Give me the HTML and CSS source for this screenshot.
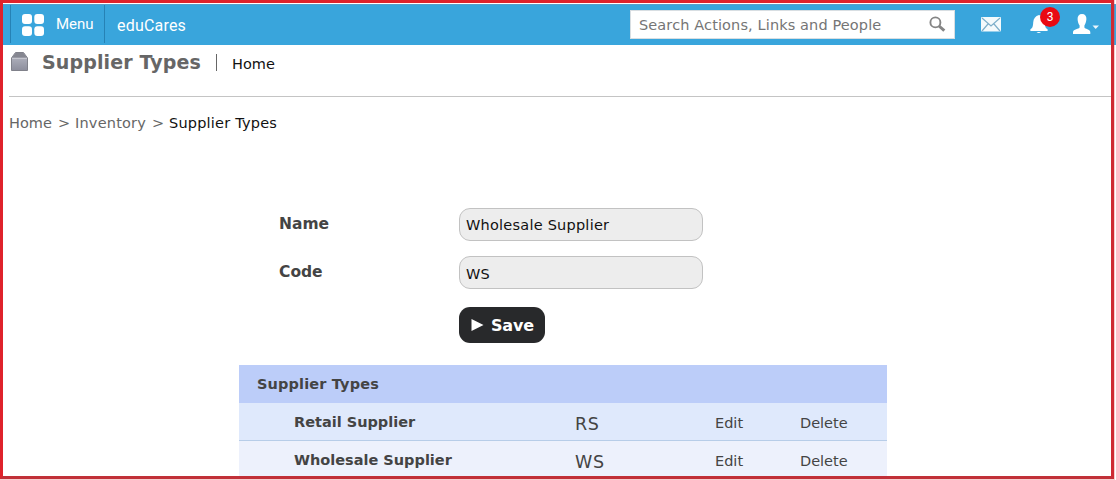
FILE: index.html
```html
<!DOCTYPE html>
<html lang="en">
<head>
<meta charset="utf-8">
<title>Supplier Types</title>
<link rel="stylesheet" href="styles.css">
</head>
<body>
<div class="screen">
  <header class="topbar">
    <a class="menu">
      <svg width="22" height="22" viewBox="0 0 22 22" fill="#fff"><rect width="10" height="10" rx="3"/><rect x="12.3" width="9.7" height="10" rx="3"/><rect y="12.3" width="10" height="9.7" rx="3"/><rect x="12.3" y="12.3" width="9.7" height="9.7" rx="3"/></svg>
      <span class="menu-label">Menu</span>
    </a>
    <span class="brand">eduCares</span>
    <div class="search">
      <span class="search-hint">Search Actions, Links and People</span>
      <svg width="17" height="17" viewBox="0 0 17 17" fill="none" stroke="#858585"><circle cx="6.4" cy="6.4" r="5" stroke-width="1.9"/><path d="M10 10l5.3 4.7" stroke-width="3"/></svg>
    </div>
    <svg class="mail" width="20" height="15" viewBox="0 0 20 15"><rect width="20" height="14.5" rx="1" fill="#f4fafc"/><path d="M1 1l9 8 9-8M1 14l6-7M19 14l-6-7" fill="none" stroke="#7dafca" stroke-width="1.2"/></svg>
    <div class="alerts">
      <svg width="18" height="19" viewBox="0 0 18 19" fill="#fff"><path d="M9 0C5.300 1 3.500 3.500 3.200 7.500 3 11.500 2.500 13 .4 14.300V16h17.200v-1.700c-2.100-1.300-2.600-2.800-2.800-6.800C14.500 3.500 12.700 1 9 0z"/><path d="M6.500 17h4.500q-2 2-4.500 0z"/></svg>
      <span class="badge">3</span>
    </div>
    <svg class="user" width="27" height="21" viewBox="0 0 27 21" fill="#fff"><path d="M9 0c3 0 4.600 2 4.400 5-.2 3-1 5-2 6.500v2c.5 1.500 5.600 1.500 5.900 4.500v2H0V18c.3-3 6-3 6.600-4.500v-2C5.500 10 4.700 8 4.600 5 4.500 2 6 0 9 0z"/><path d="M19.500 11.500h6.500L22.700 15z" opacity=".9"/></svg>
  </header>

  <main>
    <div class="heading">
      <svg class="box" width="17" height="19" viewBox="0 0 17 19"><defs><linearGradient id="g" x2="0" y2="1"><stop stop-color="#b9bbc6"/><stop offset="1" stop-color="#8d8e9c"/></linearGradient></defs><path d="M4.500.5h8l4 5.500v12.500H.5V6z" fill="url(#g)" stroke="#80818a"/><path d="M4.500 1h8l3.200 4.500H1.300z" fill="#858690"/><path d="M1 6.500h15" stroke="#c4c5cd"/></svg>
      <h1>Supplier Types</h1>
      <span class="divider"></span>
      <a class="home">Home</a>
    </div>
    <nav class="crumbs"><span class="c1">Home</span><span class="gt">&gt;</span><span class="c2">Inventory</span><span class="gt">&gt;</span><span class="here">Supplier Types</span></nav>

    <form class="form">
      <label for="name">Name</label><input id="name" value="Wholesale Supplier">
      <label for="code">Code</label><input id="code" class="code" value="WS">
      <button type="button"><svg width="13" height="12" viewBox="0 0 13 12"><path d="M.5 0L12.500 6 .5 12z" fill="#fff"/></svg><span>Save</span></button>
    </form>

    <section class="list">
      <h2><span>Supplier Types</span></h2>
      <div class="row"><b class="retail">Retail Supplier</b><span class="abbr">RS</span><a class="edit">Edit</a><a class="delete">Delete</a></div>
      <div class="row alt"><b class="wholesale">Wholesale Supplier</b><span class="abbr">WS</span><a class="edit">Edit</a><a class="delete">Delete</a></div>
    </section>
  </main>
  <div class="frame"></div>
</div>
</body>
</html>
```

FILE: styles.css
```css
* { box-sizing: border-box; }
body { margin: 0; background: #fff; font: 14.5px/20px "DejaVu Sans", Verdana, sans-serif; color: #444; }
.screen { position: relative; height: 480px; padding-top: 4px; overflow: hidden; }
.frame { position: absolute; left: 0; top: 0; width: 1114px; height: 479px; border: 3px solid #df222b; border-right-color: #cf2a33; border-bottom-color: #c13038; box-shadow: 0 0 0 1px rgba(223,60,68,.25); }

.topbar { display: flex; align-items: flex-start; height: 41px; padding-left: 10px; background: #39a5dc; color: #fff; font-family: Roboto, sans-serif; border-top: 1px solid #5b9fc8; }
.menu { display: flex; width: 95px; height: 38px; padding: 9px 0 0 11px; border-left: 1px solid #2682b5; border-right: 1px solid #2682b5; }
.menu-label { margin: 0 0 0 12px; font-size: 15px; line-height: 20px; }
.brand { width: 525px; padding: 10px 0 0 12px; font-size: 16px; line-height: 22px; letter-spacing: .2px; }
.search { display: flex; justify-content: space-between; width: 325px; height: 29px; margin-top: 5px; padding: 5px 8px 0; border: 1px solid #d8dee2; background: #fff; color: #757575; font: 14.5px/18px "DejaVu Sans", sans-serif; letter-spacing: .12px; }
.mail { margin: 12px 0 0 26px; }
.alerts { position: relative; margin: 10px 0 0 29px; }
.alerts svg { display: block; }
.badge { position: absolute; left: 10px; top: -8px; width: 20px; height: 20px; border-radius: 50%; background: #e90912; font-size: 12px; line-height: 20px; text-align: center; }
.user { margin: 9px 0 0 25px; }

main { padding-left: 9px; width: 1111px; }
.heading { display: flex; height: 52px; border-bottom: 1px solid #c4c4c4; }
.box { margin: 7px 0 0 2px; }
h1 { margin: 5px 0 0 14px; width: 174px; font-size: 19px; line-height: 24px; letter-spacing: .13px; color: #666; white-space: nowrap; }
.divider { width: 1px; height: 17px; margin-top: 9px; background: #666; }
.home { margin: 8px 0 0 15px; color: #111; line-height: 22px; }
.crumbs { display: flex; height: 111px; padding-top: 16px; color: #666; white-space: nowrap; }
.c1 { width: 49px; }
.c2 { width: 77px; letter-spacing: .2px; }
.gt { width: 17px; }
.here { color: #111; letter-spacing: .2px; }

.form { display: grid; grid-template-columns: 180px 244px; grid-template-rows: 33px 33px 36px; row-gap: 15px; margin-left: 270px; }
label { padding-top: 6px; font-size: 15.500px; font-weight: bold; }
input { width: 244px; height: 33px; padding: 0 6px; border: 1px solid #c2c2c2; border-radius: 11px; background: #ededed; color: #111; font: 14.5px "DejaVu Sans", sans-serif; letter-spacing: .23px; }
.code { padding-top: 2px; }
button { grid-column: 2; display: flex; align-items: center; gap: 7px; width: 86px; height: 36px; margin-top: 3px; padding: 0 0 0 12px; border: 0; border-radius: 11px; background: #28292b; color: #fff; font: bold 16px "DejaVu Sans", sans-serif; letter-spacing: -.2px; }

.list { width: 648px; margin: 25px 0 0 230px; }
h2 { height: 38px; margin: 0; padding: 9px 0 0 18px; background: #bccdf9; font-size: 14.5px; line-height: 20px; letter-spacing: .14px; }
.row { display: grid; grid-template-columns: 281px 140px 85px 1fr; height: 38px; padding: 9px 0 0 55px; background: #dfe9fc; border-bottom: 1px solid #b7cde8; white-space: nowrap; }
.alt { background: #edf1fc; }
.abbr { font-size: 17.500px; line-height: 24px; letter-spacing: .6px; }
.edit, .delete { padding-top: 1px; }
```
